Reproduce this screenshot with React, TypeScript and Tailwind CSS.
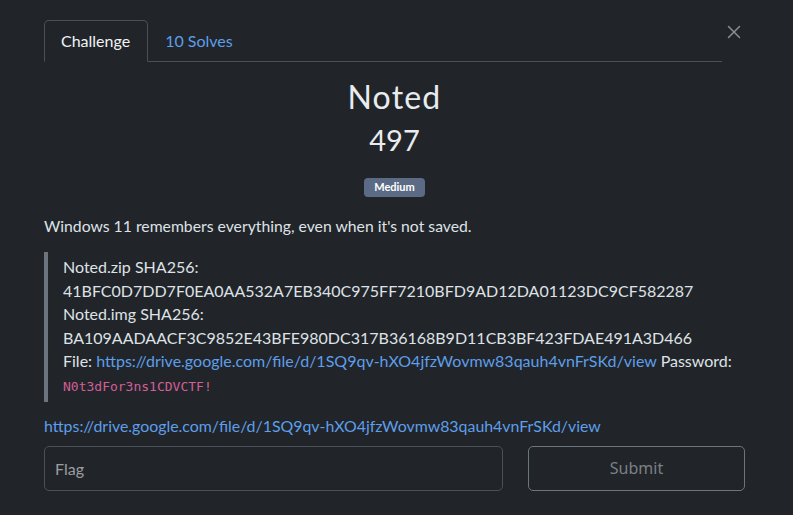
import { X } from 'lucide-react';

const lato = { fontFamily: 'Lato, "Noto Sans", sans-serif' };

export default function App() {
  return (
    <div
      className="w-[793px] h-[515px] bg-[#212529] text-[#dee2e6] overflow-hidden relative"
      style={lato}
    >
      {/* Close */}
      <button className="absolute left-[723px] top-[21px] text-[#8a8e93]">
        <X className="w-[22px] h-[22px]" strokeWidth={1.6} />
      </button>

      <div className="pl-[44px] pr-[48px] pt-[20px]">
        {/* Tabs */}
        <div className="flex items-end border-b border-[#495057] mr-[23px]">
          <div className="h-[42px] pl-[16px] pr-[17px] flex items-center border border-[#495057] border-b-[#212529] rounded-t-[5px] -mb-px text-[16px] text-[#f1f3f5]">
            Challenge
          </div>
          <div className="h-[41px] px-[17px] flex items-center text-[16px] text-[#5e9eea]">
            10 Solves
          </div>
        </div>

        {/* Title */}
        <div className="flex flex-col items-center">
          <h1 className="text-[32px] leading-[38px] mt-[16px] text-[#e9ecef] tracking-[1.2px]">Noted</h1>
          <h3 className="text-[29px] leading-[34px] mt-[7px] text-[#e9ecef]">497</h3>
          <span className="mt-[21px] bg-[#5b6b86] text-white text-[11px] font-bold rounded-[4px] px-[10px] h-[19px] flex items-center">
            Medium
          </span>
        </div>

        {/* Description */}
        <p className="mt-[18px] text-[15.75px] leading-[22px]">
          Windows 11 remembers everything, even when it's not saved.
        </p>

        <blockquote className="mt-[15px] border-l-[4px] border-[#6c757d] pl-[15px] py-[3px] text-[16px] leading-[23.6px]">
          <div>Noted.zip SHA256:</div>
          <div>41BFC0D7DD7F0EA0AA532A7EB340C975FF7210BFD9AD12DA01123DC9CF582287</div>
          <div>Noted.img SHA256:</div>
          <div>BA109AADAACF3C9852E43BFE980DC317B36168B9D11CB3BF423FDAE491A3D466</div>
          <div>
            File:{' '}
            <a className="text-[#5e9eea]">https://drive.google.com/file/d/1SQ9qv-hXO4jfzWovmw83qauh4vnFrSKd/view</a>{' '}
            Password:
          </div>
          <code
            className="text-[13px] text-[#d45f98]"
            style={{ fontFamily: '"DejaVu Sans Mono", "Liberation Mono", monospace' }}
          >
            N0t3dFor3ns1CDVCTF!
          </code>
        </blockquote>

        <p className="mt-[13px] text-[15.9px] leading-[22px]">
          <a className="text-[#5e9eea]">https://drive.google.com/file/d/1SQ9qv-hXO4jfzWovmw83qauh4vnFrSKd/view</a>
        </p>

        {/* Flag form */}
        <div className="mt-[9px] flex gap-[25px]">
          <input
            placeholder="Flag"
            className="w-[459px] h-[45px] rounded-[5px] border border-[#495057] bg-transparent px-[10px] text-[16px] placeholder:text-[#9a9ea3] outline-none"
          />
          <button
            className="flex-1 h-[45px] rounded-[5px] border border-[#6c757d] text-[#7b8085] text-[16px]"
            style={{ fontFamily: '"Noto Sans", sans-serif' }}
          >
            Submit
          </button>
        </div>
      </div>
    </div>
  );
}
